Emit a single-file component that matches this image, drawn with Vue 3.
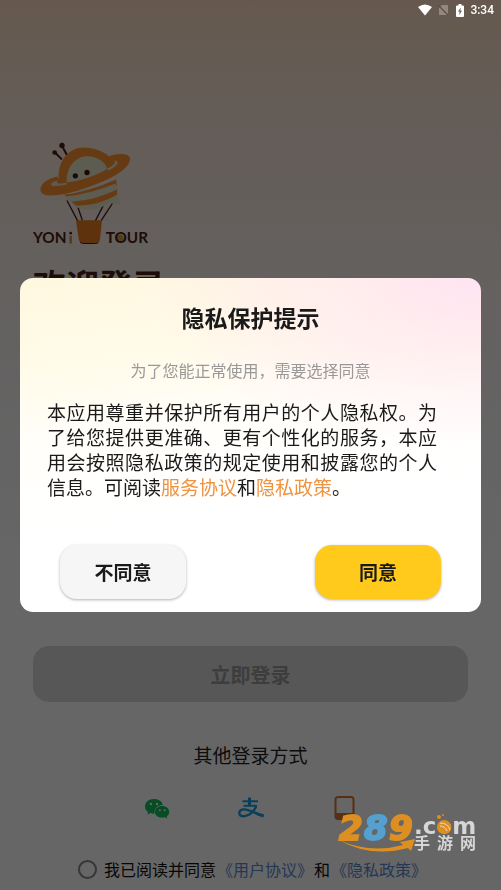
<script setup>
import { ref } from 'vue'

const agreed = ref(false)
const showPrivacy = ref(true)

const accept = () => {
  agreed.value = true
  showPrivacy.value = false
}

const decline = () => {
  showPrivacy.value = false
}
</script>

<template>
  <div class="login-page">
    <svg class="logo" viewBox="39 30 345 320" role="img" aria-label="YONi TOUR">
      <!-- antennae -->
      <g stroke="#4a1e16" stroke-width="6" stroke-linecap="round">
        <path d="M105 67 L124 86" />
        <path d="M126 47 L140 73" />
      </g>
      <circle cx="104" cy="67" r="7" fill="#4a1e16" />
      <circle cx="126" cy="46" r="8" fill="#4a1e16" />
      <!-- ropes -->
      <g stroke="#4a1e16" stroke-width="4">
        <path d="M141 211 L173 272" />
        <path d="M174 232 L187 270" />
        <path d="M252 222 L226 272" />
        <path d="M277 220 L243 272" />
      </g>
      <!-- planet -->
      <path d="M130 196 Q205 200 290 150 L294 190 L300 224 L270 216 Q215 256 163 227 Z" fill="#e9e6c8" />
      <path d="M116 148 C112 88 150 51 193 52 C228 53 255 68 267 78 C295 68 329 70 330 85 C331 107 302 129 262 148 C200 176 118 202 78 195 C56 191 58 172 71 158 C82 147 99 142 111 139 Z" fill="#ff9230" />
      <path d="M140 157 C137 109 168 78 202 78 C235 79 256 96 262 116 C225 139 180 152 140 157 Z" fill="#e9e6c8" />
      <path d="M111 151 Q84 160 97 167 Q120 168 140 163 L140 158 Q118 163 111 158 Z" fill="#e9e6c8" />
      <path d="M262 116 Q292 100 283 91 Q300 93 288 106 Q278 116 264 122 Z" fill="#e9e6c8" />
      <path d="M132 194 Q205 185 288 148 L291 165 Q225 202 151 208 Z" fill="#ff9230" />
      <path d="M137 199 Q215 190 287 160 L291 177 Q235 209 157 216 Z" fill="#e9e6c8" />
      <path d="M155 215 Q230 209 292 177 L290 194 Q235 228 168 226 Z" fill="#ff9230" />
      <circle cx="166" cy="137" r="8" fill="#3d1a14" />
      <circle cx="201" cy="127" r="8" fill="#3d1a14" />
      <!-- basket -->
      <path d="M168 270 H246 L240 326 Q239 339 226 339 H190 Q178 339 176 326 Z" fill="#e87d1e" />
      <path d="M180 336 Q184 340 192 340 H226 Q233 340 236 336" fill="none" stroke="#4a1e16" stroke-width="3" />
      <circle cx="300" cy="324" r="11" fill="#c9a04a" />
      <g class="logo-word" fill="#4a1e16">
        <text x="39" y="340">YON</text>
        <text x="257" y="340">TOUR</text>
      </g>
      <path d="M152 317 V340" stroke="#c98a3a" stroke-width="7" />
      <circle cx="152" cy="309" r="4" fill="#4a1e16" />
    </svg>

    <h1 class="welcome">欢迎登录</h1>

    <div class="login-actions">
      <button class="login-button" type="button">立即登录</button>

      <p class="other-title">其他登录方式</p>
      <div class="providers">
        <button class="provider" type="button" aria-label="微信登录">
          <svg viewBox="0 0 26 26">
            <path d="M10 4 C4.500 4 1 7.300 1 11.400 C1 13.700 2.200 15.700 4.100 17 L3.300 19.700 L6.400 18.100 C7.600 18.500 8.700 18.700 10 18.700 C10.200 18.700 10.500 18.700 10.700 18.600 C9.700 13.600 13.500 10 18.800 10 C18.200 6.500 14.600 4 10 4 Z" fill="#10bf5e" />
            <path d="M18.200 11 C14 11 11 13.600 11 16.900 C11 20.100 14 22.600 18.200 22.600 C19.100 22.600 20.100 22.500 20.900 22.200 L23.400 23.500 L22.800 21.200 C24.300 20.200 25.200 18.600 25.200 16.900 C25.200 13.600 22.200 11 18.200 11 Z" fill="#10bf5e" />
            <g fill="#fff">
              <circle cx="7" cy="9" r="1.200" />
              <circle cx="13" cy="9" r="1.200" />
              <circle cx="15.800" cy="15.300" r="1" />
              <circle cx="20.600" cy="15.300" r="1" />
            </g>
          </svg>
        </button>
        <button class="provider" type="button" aria-label="支付宝登录">
          <svg viewBox="0 0 26 26" fill="none" stroke="#189de0">
            <path d="M4.500 6.300 H20" stroke-width="2" />
            <path d="M11.500 2.500 V11" stroke-width="3" />
            <path d="M5.500 10.800 H18.800" stroke-width="2" />
            <path d="M18.300 10.800 C16.500 16 11.500 21.200 6.200 21.200 C2.800 21.200 1.300 19.800 1.300 17.900 C1.300 15.700 3.300 14.300 6.200 14.400 C12 14.700 17 18.500 25.500 20.500" stroke-width="2.400" />
            <path d="M14 17 Q19 19.500 25.800 19.200 L25.500 22.500 Q19 21 14 17 Z" fill="#189de0" stroke="none" />
          </svg>
        </button>
        <button class="provider" type="button" aria-label="手机号登录">
          <svg viewBox="0 0 26 26">
            <path fill-rule="evenodd" d="M6 1 H19 Q22.500 1 22.500 4.500 V21.500 Q22.500 25 19 25 H6 Q2.500 25 2.500 21.500 V4.500 Q2.500 1 6 1 Z M6 3 Q4.500 3 4.500 4.500 V18 H20.500 V4.500 Q20.500 3 19 3 Z M11 20.500 V22.500 H15 V20.500 Z" fill="#d9772e" />
          </svg>
        </button>
      </div>

      <div class="agreement">
        <input id="agree" v-model="agreed" class="agree-check" type="checkbox">
        <label for="agree">我已阅读并同意</label>
        <a href="#terms">《用户协议》</a>
        <span>和</span>
        <a href="#privacy">《隐私政策》</a>
      </div>
    </div>
  </div>

  <div v-if="showPrivacy" class="overlay">
    <section class="dialog" role="dialog" aria-modal="true" aria-labelledby="dialog-title">
      <h2 id="dialog-title" class="dialog-title">隐私保护提示</h2>
      <p class="dialog-hint">为了您能正常使用，需要选择同意</p>
      <p class="dialog-text">本应用尊重并保护所有用户的个人隐私权。为了给您提供更准确、更有个性化的服务，本应用会按照隐私政策的规定使用和披露您的个人信息。可阅读<a href="#terms">服务协议</a>和<a href="#privacy">隐私政策</a>。</p>
      <div class="dialog-buttons">
        <button class="dialog-button" type="button" @click="decline">不同意</button>
        <button class="dialog-button primary" type="button" @click="accept">同意</button>
      </div>
    </section>
  </div>

  <div class="status-bar">
    <svg class="wifi" viewBox="0 0 14 12">
      <path d="M0 3 Q7 -2 14 3 L7 11.500 Z" fill="#fff" />
    </svg>
    <svg class="sim" viewBox="0 0 11 12">
      <path d="M4 1 H9 Q10 1 10 2 V11 H1 V4 Z" fill="#93877f" />
      <path d="M0 1 L10.500 11.500" stroke="#5d5047" stroke-width="1.300" />
    </svg>
    <svg class="battery" viewBox="0 0 8 13">
      <path fill-rule="evenodd" d="M2.500 0 H5.500 V1.500 H7 Q8 1.500 8 2.500 V12 Q8 13 7 13 H1 Q0 13 0 12 V2.500 Q0 1.500 1 1.500 H2.500 Z M4.800 3.500 L2 7.600 H3.700 L3.200 11 L6 6.700 H4.300 Z" fill="#fff" />
    </svg>
    <span>3:34</span>
  </div>

  <svg class="site-mark" viewBox="-4 -10 148 60" role="img" aria-label="289.com 手游网">
    <g class="mark-number">
      <text x="1" y="28" fill="#dd8f22" stroke="#dd8f22">2</text>
      <text x="26" y="28" fill="#56a0cf" stroke="#56a0cf">8</text>
      <text x="51" y="28" fill="#dd8f22" stroke="#dd8f22">9</text>
    </g>
    <path d="M1 28 Q32 42 65 33 L62 30 L77 27 L73 39 L70 36 Q32 46 1 28 Z" fill="#dd8f22" />
    <text class="mark-domain" x="76" y="22" fill="#d6d6d6">.c<tspan fill="#dd8f22">o</tspan>m</text>
    <circle cx="106" cy="15" r="7" fill="#dd8f22" />
    <g fill="none" stroke="#e8dccb">
      <path d="M102 14 Q107 14 109 19" />
      <path d="M102 11 Q110 11 112 18" />
    </g>
    <circle cx="101" cy="5" r="2" fill="#dd8f22" />
    <circle cx="105" cy="3" r="1" fill="#dd8f22" />
    <g class="mark-cn" fill="#d6d6d6">
      <text x="76" y="37">手</text>
      <text x="99" y="37">游</text>
      <text x="122" y="37">网</text>
    </g>
  </svg>
</template>

<style>
body {
  margin: 0;
  background: #fff;
  font-family: 'Noto Sans CJK SC', sans-serif;
}
</style>

<style scoped>
.login-page {
  box-sizing: border-box;
  min-height: 100vh;
  padding: 140px 33px 9px;
  display: flex;
  flex-direction: column;
  background: linear-gradient(#ffddc2 0%, #fce3cd 5%, #fbe8dc 16%, #faf2ee 32%, #fcfafa 50%, #fff 66%);
}

.logo {
  width: 115px;
  height: 107px;
}

.logo-word {
  font-family: Lato, sans-serif;
  font-size: 46px;
  font-weight: bold;
}

.welcome {
  margin: 14px 0 0;
  font-size: 33px;
  line-height: 46px;
  font-weight: bold;
  color: #4a1e16;
}

.login-actions {
  margin-top: auto;
  display: flex;
  flex-direction: column;
}

.login-button {
  height: 56px;
  border: none;
  border-radius: 16px;
  background: #dadada;
  color: #999;
  font-family: inherit;
  font-size: 20px;
  font-weight: bold;
}

.other-title {
  margin: 40px 0 27px;
  font-size: 19px;
  line-height: 26px;
  text-align: center;
  color: #222;
}

.providers {
  display: flex;
  justify-content: center;
  gap: 68px;
}

.provider {
  width: 26px;
  height: 26px;
  padding: 0;
  border: none;
  background: none;
}

.provider svg {
  display: block;
  width: 26px;
  height: 26px;
}

.agreement {
  margin-top: 36px;
  padding-left: 4px;
  display: flex;
  align-items: center;
  justify-content: center;
  gap: 1px;
  font-size: 16px;
  line-height: 24px;
  color: #111;
}

.agree-check {
  appearance: none;
  box-sizing: border-box;
  width: 19px;
  height: 19px;
  margin: 0 6px 0 0;
  border: 2px solid #888;
  border-radius: 50%;
}

.agree-check:checked {
  background: #ffca1c;
}

.agreement a {
  color: #5b8cd6;
  text-decoration: none;
}

.overlay {
  position: fixed;
  inset: 0;
  padding: 20px;
  display: flex;
  align-items: center;
  background: rgba(0, 0, 0, 0.6);
}

.dialog {
  flex: 1;
  padding: 23px 27px 13px;
  border-radius: 13px;
  background:
    radial-gradient(ellipse 75% 50% at 100% 0%, #ffe4f2 0%, rgba(255, 232, 240, 0.6) 50%, rgba(255, 245, 240, 0) 100%),
    linear-gradient(172deg, #fff8e0 0%, #fffbe8 22%, #fffefa 42%, #fff 65%);
}

.dialog-title {
  margin: 0;
  font-size: 23px;
  line-height: 32px;
  font-weight: bold;
  text-align: center;
  color: #1a1a1a;
}

.dialog-hint {
  margin: 25px 0 0;
  font-size: 16px;
  line-height: 24px;
  text-align: center;
  color: #999;
}

.dialog-text {
  margin: 17px 0 0;
  padding-right: 17px;
  font-size: 19px;
  line-height: 25px;
  text-align: justify;
  color: #1a1a1a;
}

.dialog-text a {
  color: #ee9340;
  text-decoration: none;
}

.dialog-buttons {
  margin-top: 46px;
  padding: 0 13px;
  display: flex;
  justify-content: space-between;
}

.dialog-button {
  width: 126px;
  height: 54px;
  padding: 0 0 2px;
  border: none;
  border-radius: 17px;
  background: #f6f6f6;
  box-shadow: 0 1px 3px rgba(0, 0, 0, 0.3);
  color: #1a1a1a;
  font-family: inherit;
  font-size: 19px;
  font-weight: bold;
}

.dialog-button.primary {
  background: #ffca1c;
}

.status-bar {
  position: fixed;
  top: 0;
  right: 0;
  height: 20px;
  padding-right: 7px;
  display: flex;
  align-items: center;
  color: #fff;
  font-family: Roboto, sans-serif;
  font-size: 12px;
  font-weight: 500;
}

.wifi {
  width: 14px;
  height: 12px;
  margin-right: 6px;
}

.sim {
  width: 11px;
  height: 12px;
  margin-right: 7px;
}

.battery {
  width: 8px;
  height: 13px;
  margin-right: 6px;
}

.site-mark {
  position: fixed;
  right: 19px;
  bottom: 28px;
  width: 148px;
  height: 60px;
  pointer-events: none;
}

.mark-number {
  font-family: 'DejaVu Sans', sans-serif;
  font-size: 34px;
  font-weight: bold;
  font-style: italic;
  stroke-width: 2px;
}

.mark-domain {
  font-family: 'DejaVu Sans', sans-serif;
  font-size: 23px;
  font-weight: bold;
}

.mark-cn {
  font-size: 16px;
  font-weight: bold;
}
</style>
